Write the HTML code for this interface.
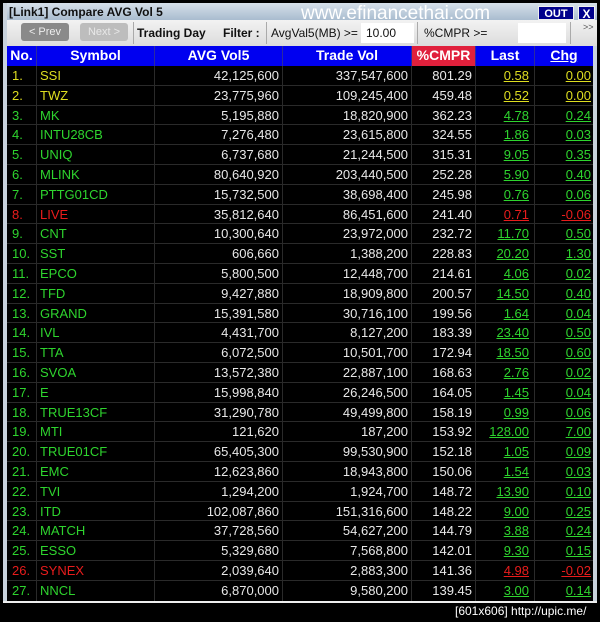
<!DOCTYPE html>
<html><head><meta charset="utf-8"><style>
*{margin:0;padding:0;box-sizing:border-box}
body{width:600px;height:622px;background:#000;position:relative;overflow:hidden;font-family:"Liberation Sans",sans-serif}
.win{position:absolute;left:3px;top:3px;width:594px;height:600px;background:#c8d2dc;border-bottom:2px solid #eee}
.title{position:absolute;left:4px;top:0;width:590px;height:17px;background:linear-gradient(#d6e0ea,#a9bccf);font-weight:bold;font-size:12px;color:#111;padding:2px 0 0 2px}
.wm{position:absolute;left:298px;top:1px;font-size:19px;color:#fff;line-height:20px}
.out{position:absolute;left:535px;top:3px;width:36px;height:14px;background:#00008c;color:#fff;font-weight:bold;font-size:11px;text-align:center;line-height:14px;border:1px solid #eee}
.x{position:absolute;left:575px;top:3px;width:17px;height:14px;background:#00008c;color:#fff;font-weight:bold;font-size:12px;text-align:center;line-height:14px;border:1px solid #eee}
.tb{position:absolute;left:4px;top:17px;width:590px;height:26px;background:linear-gradient(#f2f2f2,#dcdcdc);font-size:12px;color:#111}
.tb div{position:absolute}
.grid{position:absolute;left:7px;top:46px;width:586px;background:#000}
.row{display:flex;height:19.8px;border-bottom:1px solid #2a2a2a;font-size:13px;line-height:19px}
.row>div{border-right:1px solid #2a2a2a;white-space:nowrap;overflow:hidden}
.c1{width:30px;padding-left:5px}.c2{width:118px;padding-left:3px}.c3{width:128px;text-align:right;padding-right:3px;color:#e8e8e8}.c4{width:129px;text-align:right;padding-right:3px;color:#e8e8e8}.c5{width:64px;text-align:right;padding-right:3px;color:#e8e8e8}.c6{width:59px;text-align:right;padding-right:5px;text-decoration:underline}.c7{width:58px;text-align:right;padding-right:2px;text-decoration:underline;border-right:none!important}
.hd{background:#0000f0;color:#fff;font-weight:bold;font-size:14px;height:20px;border-bottom:none}
.hd>div{text-align:center;color:#fff!important;padding:0!important;border-right:1px solid #2a2aa0}
.hd .c5{background:#e0203c}
.y{color:#dede20}.g{color:#2ed42e}.r{color:#e81c1c}
.cap{position:absolute;left:455px;top:604px;color:#fff;font-size:12px;font-family:"Liberation Sans Narrow","Liberation Sans",sans-serif;white-space:nowrap}
</style></head><body>
<div class="win">
<div class="title">[Link1] Compare AVG Vol 5</div>
<div class="wm">www.efinancethai.com</div>
<div class="out">OUT</div><div class="x">X</div>
<div class="tb">
<div style="left:14px;top:3px;width:48px;height:18px;background:#8a8a8a;border-radius:3px;color:#eee;font-size:11px;text-align:center;line-height:18px">&lt; Prev</div>
<div style="left:73px;top:3px;width:48px;height:18px;background:#bdbdbd;border-radius:3px;color:#e8e8e8;font-size:11px;text-align:center;line-height:18px">Next &gt;</div>
<div style="left:126px;top:2px;width:1px;height:22px;background:#aaa"></div>
<div style="left:130px;top:6px;font-weight:bold">Trading Day</div>
<div style="left:216px;top:6px;font-weight:bold">Filter :</div>
<div style="left:259px;top:2px;width:1px;height:22px;background:#aaa"></div>
<div style="left:264px;top:6px">AvgVal5(MB) &gt;=</div>
<div style="left:354px;top:3px;width:53px;height:20px;background:#fff;padding:3px 0 0 5px">10.00</div>
<div style="left:410px;top:2px;width:1px;height:22px;background:#aaa"></div>
<div style="left:417px;top:6px">%CMPR &gt;=</div>
<div style="left:511px;top:3px;width:48px;height:20px;background:#fff"></div>
<div style="left:563px;top:2px;width:1px;height:22px;background:#aaa"></div>
<div style="left:576px;top:2px;font-size:9px;color:#555">&gt;&gt;</div>
</div>
</div>
<div class="grid">
<div class="row hd"><div class="c1">No.</div><div class="c2">Symbol</div><div class="c3">AVG Vol5</div><div class="c4">Trade Vol</div><div class="c5">%CMPR</div><div class="c6" style="text-decoration:none">Last</div><div class="c7">Chg</div></div>
<div class="row y"><div class="c1">1.</div><div class="c2">SSI</div><div class="c3">42,125,600</div><div class="c4">337,547,600</div><div class="c5">801.29</div><div class="c6">0.58</div><div class="c7">0.00</div></div>
<div class="row y"><div class="c1">2.</div><div class="c2">TWZ</div><div class="c3">23,775,960</div><div class="c4">109,245,400</div><div class="c5">459.48</div><div class="c6">0.52</div><div class="c7">0.00</div></div>
<div class="row g"><div class="c1">3.</div><div class="c2">MK</div><div class="c3">5,195,880</div><div class="c4">18,820,900</div><div class="c5">362.23</div><div class="c6">4.78</div><div class="c7">0.24</div></div>
<div class="row g"><div class="c1">4.</div><div class="c2">INTU28CB</div><div class="c3">7,276,480</div><div class="c4">23,615,800</div><div class="c5">324.55</div><div class="c6">1.86</div><div class="c7">0.03</div></div>
<div class="row g"><div class="c1">5.</div><div class="c2">UNIQ</div><div class="c3">6,737,680</div><div class="c4">21,244,500</div><div class="c5">315.31</div><div class="c6">9.05</div><div class="c7">0.35</div></div>
<div class="row g"><div class="c1">6.</div><div class="c2">MLINK</div><div class="c3">80,640,920</div><div class="c4">203,440,500</div><div class="c5">252.28</div><div class="c6">5.90</div><div class="c7">0.40</div></div>
<div class="row g"><div class="c1">7.</div><div class="c2">PTTG01CD</div><div class="c3">15,732,500</div><div class="c4">38,698,400</div><div class="c5">245.98</div><div class="c6">0.76</div><div class="c7">0.06</div></div>
<div class="row r"><div class="c1">8.</div><div class="c2">LIVE</div><div class="c3">35,812,640</div><div class="c4">86,451,600</div><div class="c5">241.40</div><div class="c6">0.71</div><div class="c7">-0.06</div></div>
<div class="row g"><div class="c1">9.</div><div class="c2">CNT</div><div class="c3">10,300,640</div><div class="c4">23,972,000</div><div class="c5">232.72</div><div class="c6">11.70</div><div class="c7">0.50</div></div>
<div class="row g"><div class="c1">10.</div><div class="c2">SST</div><div class="c3">606,660</div><div class="c4">1,388,200</div><div class="c5">228.83</div><div class="c6">20.20</div><div class="c7">1.30</div></div>
<div class="row g"><div class="c1">11.</div><div class="c2">EPCO</div><div class="c3">5,800,500</div><div class="c4">12,448,700</div><div class="c5">214.61</div><div class="c6">4.06</div><div class="c7">0.02</div></div>
<div class="row g"><div class="c1">12.</div><div class="c2">TFD</div><div class="c3">9,427,880</div><div class="c4">18,909,800</div><div class="c5">200.57</div><div class="c6">14.50</div><div class="c7">0.40</div></div>
<div class="row g"><div class="c1">13.</div><div class="c2">GRAND</div><div class="c3">15,391,580</div><div class="c4">30,716,100</div><div class="c5">199.56</div><div class="c6">1.64</div><div class="c7">0.04</div></div>
<div class="row g"><div class="c1">14.</div><div class="c2">IVL</div><div class="c3">4,431,700</div><div class="c4">8,127,200</div><div class="c5">183.39</div><div class="c6">23.40</div><div class="c7">0.50</div></div>
<div class="row g"><div class="c1">15.</div><div class="c2">TTA</div><div class="c3">6,072,500</div><div class="c4">10,501,700</div><div class="c5">172.94</div><div class="c6">18.50</div><div class="c7">0.60</div></div>
<div class="row g"><div class="c1">16.</div><div class="c2">SVOA</div><div class="c3">13,572,380</div><div class="c4">22,887,100</div><div class="c5">168.63</div><div class="c6">2.76</div><div class="c7">0.02</div></div>
<div class="row g"><div class="c1">17.</div><div class="c2">E</div><div class="c3">15,998,840</div><div class="c4">26,246,500</div><div class="c5">164.05</div><div class="c6">1.45</div><div class="c7">0.04</div></div>
<div class="row g"><div class="c1">18.</div><div class="c2">TRUE13CF</div><div class="c3">31,290,780</div><div class="c4">49,499,800</div><div class="c5">158.19</div><div class="c6">0.99</div><div class="c7">0.06</div></div>
<div class="row g"><div class="c1">19.</div><div class="c2">MTI</div><div class="c3">121,620</div><div class="c4">187,200</div><div class="c5">153.92</div><div class="c6">128.00</div><div class="c7">7.00</div></div>
<div class="row g"><div class="c1">20.</div><div class="c2">TRUE01CF</div><div class="c3">65,405,300</div><div class="c4">99,530,900</div><div class="c5">152.18</div><div class="c6">1.05</div><div class="c7">0.09</div></div>
<div class="row g"><div class="c1">21.</div><div class="c2">EMC</div><div class="c3">12,623,860</div><div class="c4">18,943,800</div><div class="c5">150.06</div><div class="c6">1.54</div><div class="c7">0.03</div></div>
<div class="row g"><div class="c1">22.</div><div class="c2">TVI</div><div class="c3">1,294,200</div><div class="c4">1,924,700</div><div class="c5">148.72</div><div class="c6">13.90</div><div class="c7">0.10</div></div>
<div class="row g"><div class="c1">23.</div><div class="c2">ITD</div><div class="c3">102,087,860</div><div class="c4">151,316,600</div><div class="c5">148.22</div><div class="c6">9.00</div><div class="c7">0.25</div></div>
<div class="row g"><div class="c1">24.</div><div class="c2">MATCH</div><div class="c3">37,728,560</div><div class="c4">54,627,200</div><div class="c5">144.79</div><div class="c6">3.88</div><div class="c7">0.24</div></div>
<div class="row g"><div class="c1">25.</div><div class="c2">ESSO</div><div class="c3">5,329,680</div><div class="c4">7,568,800</div><div class="c5">142.01</div><div class="c6">9.30</div><div class="c7">0.15</div></div>
<div class="row r"><div class="c1">26.</div><div class="c2">SYNEX</div><div class="c3">2,039,640</div><div class="c4">2,883,300</div><div class="c5">141.36</div><div class="c6">4.98</div><div class="c7">-0.02</div></div>
<div class="row g" style="border-bottom:none"><div class="c1">27.</div><div class="c2">NNCL</div><div class="c3">6,870,000</div><div class="c4">9,580,200</div><div class="c5">139.45</div><div class="c6">3.00</div><div class="c7">0.14</div></div>
</div>
<div class="cap">[601x606] http://upic.me/</div>
</body></html>
